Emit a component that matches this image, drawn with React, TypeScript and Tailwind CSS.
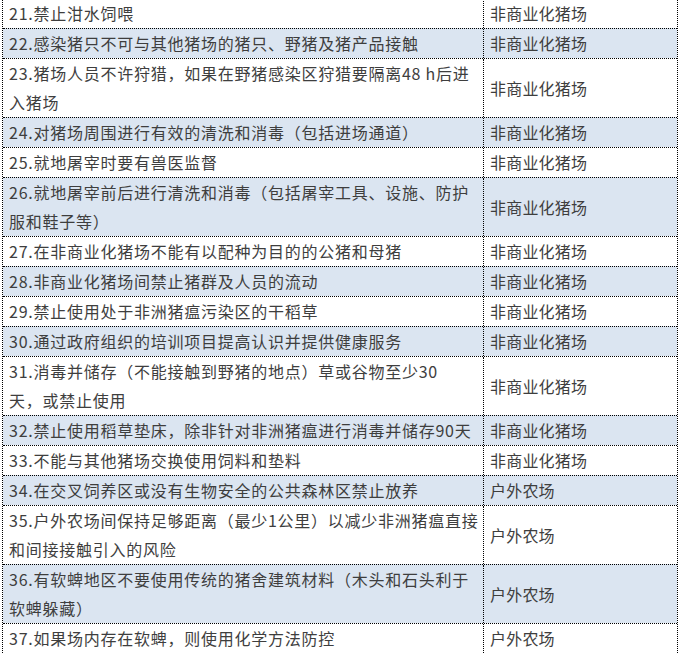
const rows: { lines: string[]; type: string; blue: boolean }[] = [
  { lines: ["21.禁止泔水饲喂"], type: "非商业化猪场", blue: false },
  { lines: ["22.感染猪只不可与其他猪场的猪只、野猪及猪产品接触"], type: "非商业化猪场", blue: true },
  { lines: ["23.猪场人员不许狩猎，如果在野猪感染区狩猎要隔离48 h后进", "入猪场"], type: "非商业化猪场", blue: false },
  { lines: ["24.对猪场周围进行有效的清洗和消毒（包括进场通道）"], type: "非商业化猪场", blue: true },
  { lines: ["25.就地屠宰时要有兽医监督"], type: "非商业化猪场", blue: false },
  { lines: ["26.就地屠宰前后进行清洗和消毒（包括屠宰工具、设施、防护", "服和鞋子等）"], type: "非商业化猪场", blue: true },
  { lines: ["27.在非商业化猪场不能有以配种为目的的公猪和母猪"], type: "非商业化猪场", blue: false },
  { lines: ["28.非商业化猪场间禁止猪群及人员的流动"], type: "非商业化猪场", blue: true },
  { lines: ["29.禁止使用处于非洲猪瘟污染区的干稻草"], type: "非商业化猪场", blue: false },
  { lines: ["30.通过政府组织的培训项目提高认识并提供健康服务"], type: "非商业化猪场", blue: true },
  { lines: ["31.消毒并储存（不能接触到野猪的地点）草或谷物至少30", "天，或禁止使用"], type: "非商业化猪场", blue: false },
  { lines: ["32.禁止使用稻草垫床，除非针对非洲猪瘟进行消毒并储存90天"], type: "非商业化猪场", blue: true },
  { lines: ["33.不能与其他猪场交换使用饲料和垫料"], type: "非商业化猪场", blue: false },
  { lines: ["34.在交叉饲养区或没有生物安全的公共森林区禁止放养"], type: "户外农场", blue: true },
  { lines: ["35.户外农场间保持足够距离（最少1公里）以减少非洲猪瘟直接", "和间接接触引入的风险"], type: "户外农场", blue: false },
  { lines: ["36.有软蜱地区不要使用传统的猪舍建筑材料（木头和石头利于", "软蜱躲藏）"], type: "户外农场", blue: true },
  { lines: ["37.如果场内存在软蜱，则使用化学方法防控"], type: "户外农场", blue: false },
];

export default function App() {
  return (
    <div className="h-[653px] w-[680px] overflow-hidden bg-white">
      <div
        className="ml-[2px] mt-[-2px] w-[676px] border-l border-r border-dotted border-black text-[16px] tracking-[0.75px] text-[#3e3e3e]"
        style={{ fontFamily: '"Noto Sans CJK SC", "Noto Sans", sans-serif' }}
      >
        {rows.map((r, i) => (
          <div
            key={i}
            className={`flex border-t border-dotted border-black ${r.blue ? "bg-[#dbe5f1]" : "bg-white"}`}
          >
            <div className="w-[481px] shrink-0 border-r border-dotted border-black px-[6px] leading-[29px]">
              {r.lines.map((l, j) => (
                <div key={j} className="whitespace-nowrap">
                  {l}
                </div>
              ))}
            </div>
            <div className="flex flex-1 items-center px-[6px] leading-[29px] tracking-[0.2px]">
              {r.type}
            </div>
          </div>
        ))}
      </div>
    </div>
  );
}
